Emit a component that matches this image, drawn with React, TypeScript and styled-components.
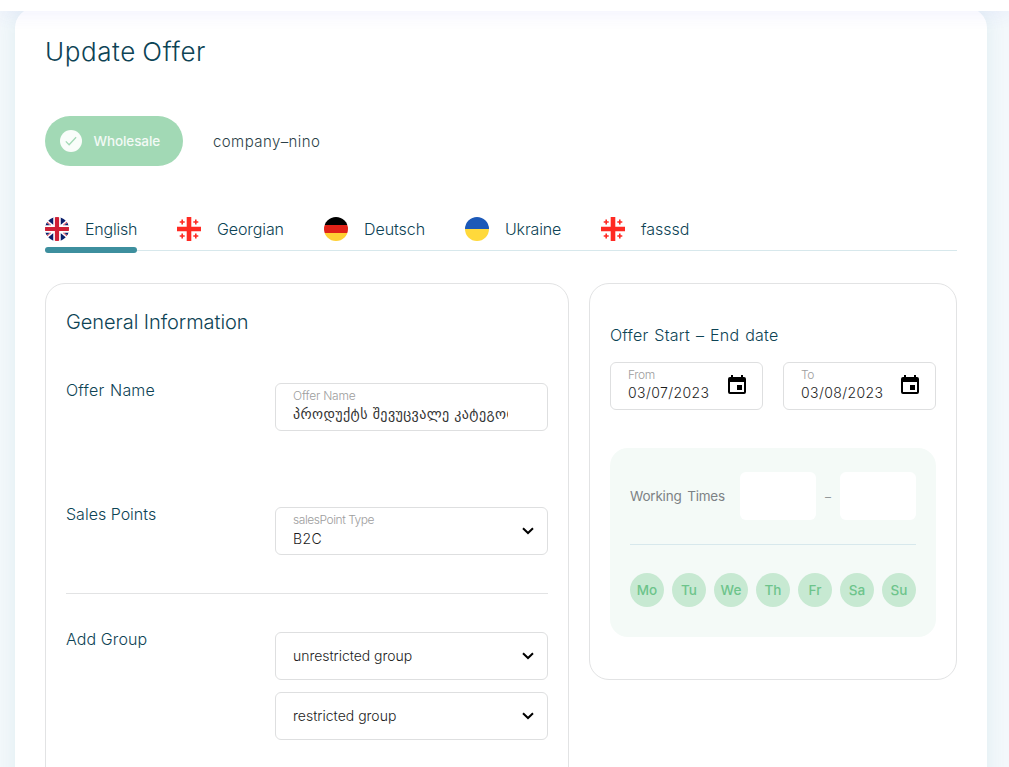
import React from "react";
import styled, { createGlobalStyle } from "styled-components";

const GlobalStyle = createGlobalStyle`
  *, *::before, *::after { box-sizing: border-box; }
  html, body { margin: 0; height: 767px; overflow: hidden; }
  body {
    font-family: Inter, "DejaVu Sans", sans-serif;
    font-weight: 300;
    color: #0d4355;
    background: #f3f8fb;
  }
  h1, h2, h3, p { margin: 0; font-weight: 300; }
  button { font: inherit; border: 0; margin: 0; padding: 0; cursor: pointer; }
`;

const Page = styled.div`
  display: flex;
  flex-direction: column;
  height: 767px;
  overflow: hidden;
`;

const TopBar = styled.header`
  position: relative;
  z-index: 2;
  flex: none;
  height: 11px;
  background: #fff;
  box-shadow: 0 0 20px rgba(70, 70, 230, 0.12);
`;

const Sheet = styled.main`
  flex: none;
  width: 972px;
  height: 800px;
  margin: -3px 0 0 15px;
  padding: 28px 30px 0;
  border-radius: 20px;
  background: #fff;
  box-shadow: 0 0 20px rgba(61, 143, 158, 0.1);
`;

/* A line of type; tracking and word spacing are in px. */
const Line = styled.span<{ $size: number; $track?: number; $word?: number }>`
  display: block;
  white-space: nowrap;
  font-size: ${(p) => p.$size}px;
  letter-spacing: ${(p) => p.$track ?? 0}px;
  word-spacing: ${(p) => p.$word ?? 0}px;
`;

const Title = styled(Line).attrs({ as: "h1" })`
  line-height: 32px;
`;

const CompanyRow = styled.div`
  display: flex;
  align-items: center;
  gap: 30px;
  margin-top: 48px;
  height: 50px;
`;

const Pill = styled.button`
  display: flex;
  align-items: center;
  gap: 11.5px;
  width: 138px;
  height: 50px;
  padding-left: 15px;
  border-radius: 25px;
  background: #a2d9b5;
  color: #f3faf6;
`;

const PillText = styled(Line)`
  font-weight: 500;
`;

const CompanyName = styled(Line)`
  color: #2c3f48;
`;

const Tabs = styled.nav`
  display: flex;
  gap: 40px;
  height: 35px;
  margin-top: 50px;
  border-bottom: 1px solid #d7e8ec;
`;

const Tab = styled.div<{ $width: number; $active?: boolean }>`
  position: relative;
  display: flex;
  flex: none;
  gap: 16px;
  width: ${(p) => p.$width}px;
  line-height: 26px;
  svg { flex: none; margin-top: 1px; }
  &::after {
    content: "";
    display: ${(p) => (p.$active ? "block" : "none")};
    position: absolute;
    left: 0;
    right: 0;
    top: 31px;
    height: 6px;
    border-radius: 3px;
    background: #3d8f9e;
  }
`;

const Columns = styled.div`
  display: grid;
  grid-template-columns: 524px 368px;
  gap: 20px;
  align-items: start;
  margin-top: 32px;
`;

const Panel = styled.section<{ $height: number; $top: number }>`
  height: ${(p) => p.$height}px;
  padding: ${(p) => p.$top}px 20px 0;
  border: 1px solid #e2e3e4;
  border-radius: 20px;
`;

const PanelTitle = styled(Line).attrs({ as: "h2" })`
  line-height: 28px;
`;

const FormRow = styled.div<{ $gap: number }>`
  display: flex;
  justify-content: space-between;
  align-items: flex-start;
  margin-top: ${(p) => p.$gap}px;
`;

const Label = styled(Line)`
  line-height: 16px;
`;

const RowLabel = styled(Label)`
  line-height: 14px;
`;

const Stack = styled.div`
  display: flex;
  flex-direction: column;
  gap: 12px;
`;

const Field = styled.div<{ $width: number; $end: number }>`
  display: flex;
  align-items: center;
  justify-content: space-between;
  width: ${(p) => p.$width}px;
  height: 48px;
  padding: 0 ${(p) => p.$end}px 0 17px;
  border: 1px solid #dedfe0;
  border-radius: 6px;
  color: #1c1c1c;
  svg { flex: none; }
`;

const FieldBody = styled.div<{ $gap: number }>`
  display: flex;
  flex: 0 1 215px;
  flex-direction: column;
  gap: ${(p) => p.$gap}px;
  min-width: 0;
  padding-bottom: 3px;
  overflow: hidden;
`;

const Hint = styled(Line)`
  line-height: 15px;
  color: #9d9d9d;
`;

const Value = styled(Line)`
  line-height: 18px;
`;

const GeorgianValue = styled(Value)`
  font-family: "DejaVu Sans", sans-serif;
  font-weight: 400;
  color: #333;
`;

const Divider = styled.hr<{ $gap: number; $color: string }>`
  height: 1px;
  margin: ${(p) => p.$gap}px 0 0;
  border: 0;
  background: ${(p) => p.$color};
`;

const Dates = styled.div`
  display: flex;
  gap: 20px;
  margin-top: 19px;
`;

const Schedule = styled.div`
  height: 189px;
  margin-top: 38px;
  padding: 24px 20px 0;
  border-radius: 18px;
  background: #f4faf7;
`;

const TimesRow = styled.div`
  display: flex;
  align-items: center;
  color: #7d8285;
`;

const TimesLabel = styled(Line)`
  width: 110px;
  font-weight: 400;
`;

const TimesDash = styled.span`
  width: 24px;
  font-size: 12px;
  text-align: center;
`;

const TimeInput = styled.div`
  width: 76px;
  height: 48px;
  border-radius: 6px;
  background: #fff;
`;

const Days = styled.div`
  display: flex;
  justify-content: space-between;
  margin-top: 28px;
`;

const Day = styled.button`
  width: 34px;
  height: 34px;
  border-radius: 50%;
  background: #c7e9d2;
  color: #6dc48b;
  font-size: 13.5px;
  font-weight: 500;
  text-align: center;
`;

const CalendarBox = styled.span`
  display: flex;
  padding-bottom: 2px;
`;

const CheckIcon = () => (
  <svg width="22" height="22" viewBox="0 0 22 22">
    <circle cx="11" cy="11" r="11" fill="#f9fdfa" />
    <path d="M5.8 11.4l3.3 3.3 7-7.4" fill="none" stroke="#a2d9b5" strokeWidth="1.3" />
  </svg>
);

const Chevron = () => (
  <svg width="12" height="8" viewBox="0 0 12 8">
    <path d="M1 1.2l5 4.8 5-4.8" fill="none" stroke="#000" strokeWidth="2" />
  </svg>
);

const Calendar = () => (
  <CalendarBox>
    <svg width="18" height="20" viewBox="0 0 18 20">
      <path
        fill="#000"
        fillRule="evenodd"
        d="M3 0h2v2h8V0h2v2h1a2 2 0 0 1 2 2v13a2 2 0 0 1-2 2H2a2 2 0 0 1-2-2V4a2 2 0 0 1 2-2h1zM2 7v10h14V7zM9 10h5v5H9z"
      />
    </svg>
  </CalendarBox>
);

const UkFlag = () => (
  <svg width="24" height="24" viewBox="0 0 24 24">
    <clipPath id="uk"><circle cx="12" cy="12" r="12" /></clipPath>
    <g clipPath="url(#uk)">
      <path fill="#fff" d="M0 0h24v24H0z" />
      <path
        fill="#0a1f6b"
        d="M8.500 0v8L3 3.500 6 0zM15.500 0v8L21 3.500 18 0zM8.500 24v-8L3 20.500 6 24zM15.500 24v-8l5.500 4.500L18 24zM0 5.500h1.500L5 8.500H0zM24 5.500h-1.500L19 8.500h5zM0 18.500h1.500L5 15.500H0zM24 18.500h-1.500L19 15.500h5z"
      />
      <path d="M1.500 4.500L6 8.500M22.500 4.500L18 8.500M1.500 19.500L6 15.500M22.500 19.500L18 15.500" stroke="#cf1f35" strokeWidth="0.900" />
      <path d="M12 0v24M0 12h24" stroke="#fff" strokeWidth="7" />
      <path d="M12 0v24M0 12h24" stroke="#cf1f35" strokeWidth="4.200" />
    </g>
  </svg>
);

const GeorgiaFlag = () => (
  <svg width="24" height="24" viewBox="0 0 24 24">
    <path d="M12 0v24M0 12h24" stroke="#ff2a23" strokeWidth="4.600" />
    <path
      d="M5.200 2.500v5M2.700 5h5M18.800 2.500v5M16.300 5h5M5.200 16.500v5M2.700 19h5M18.800 16.500v5M16.300 19h5"
      stroke="#ff2a23"
      strokeWidth="1.600"
    />
  </svg>
);

const GermanyFlag = () => (
  <svg width="24" height="24" viewBox="0 0 24 24">
    <clipPath id="de"><circle cx="12" cy="12" r="12" /></clipPath>
    <g clipPath="url(#de)">
      <path fill="#000" d="M0 0h24v8H0z" />
      <path fill="#e02218" d="M0 8h24v8H0z" />
      <path fill="#ffd034" d="M0 16h24v8H0z" />
    </g>
  </svg>
);

const UkraineFlag = () => (
  <svg width="24" height="24" viewBox="0 0 24 24">
    <path fill="#1c59b8" d="M0 12a12 12 0 0 1 24 0z" />
    <path fill="#ffd93b" d="M0 12a12 12 0 0 0 24 0z" />
  </svg>
);

const tabs = [
  { text: "English", width: 92, track: -0.2, flag: <UkFlag /> },
  { text: "Georgian", width: 107, track: -0.1, flag: <GeorgiaFlag /> },
  { text: "Deutsch", width: 101, track: -0.05, flag: <GermanyFlag /> },
  { text: "Ukraine", width: 96, track: -0.15, flag: <UkraineFlag /> },
  { text: "fasssd", width: 90, track: 0, flag: <GeorgiaFlag /> },
];

const days = ["Mo", "Tu", "We", "Th", "Fr", "Sa", "Su"];

const dates = [
  { hint: "From", value: "03/07/2023" },
  { hint: "To", value: "03/08/2023" },
];

export default function App() {
  return (
    <Page>
      <GlobalStyle />
      <TopBar />
      <Sheet>
        <Title $size={26} $track={0.6} $word={-1.5}>Update Offer</Title>
        <CompanyRow>
          <Pill>
            <CheckIcon />
            <PillText $size={13.5} $track={-0.1}>Wholesale</PillText>
          </Pill>
          <CompanyName $size={15} $track={0.42}>company–nino</CompanyName>
        </CompanyRow>
        <Tabs>
          {tabs.map((t, i) => (
            <Tab key={t.text} $width={t.width} $active={i === 0}>
              {t.flag}
              <Line $size={16} $track={t.track}>{t.text}</Line>
            </Tab>
          ))}
        </Tabs>
        <Columns>
          <Panel $height={540} $top={24}>
            <PanelTitle $size={20} $track={-0.06}>General Information</PanelTitle>
            <FormRow $gap={47}>
              <RowLabel $size={16} $track={0.2} $word={1}>Offer Name</RowLabel>
              <Field $width={273} $end={17}>
                <FieldBody $gap={2}>
                  <Hint $size={12} $track={-0.2}>Offer Name</Hint>
                  <GeorgianValue $size={14} $track={0.4}>პროდუქტს შევუცვალე კატეგორია</GeorgianValue>
                </FieldBody>
              </Field>
            </FormRow>
            <FormRow $gap={76}>
              <RowLabel $size={16}>Sales Points</RowLabel>
              <Field $width={273} $end={13}>
                <FieldBody $gap={3}>
                  <Hint $size={12} $track={-0.45}>salesPoint Type</Hint>
                  <Value $size={14} $track={0.4}>B2C</Value>
                </FieldBody>
                <Chevron />
              </Field>
            </FormRow>
            <Divider $gap={38} $color="#e2e3e4" />
            <FormRow $gap={38}>
              <RowLabel $size={16} $track={0.1}>Add Group</RowLabel>
              <Stack>
                <Field $width={273} $end={13}>
                  <Value $size={14} $track={-0.04}>unrestricted group</Value>
                  <Chevron />
                </Field>
                <Field $width={273} $end={13}>
                  <Value $size={14}>restricted group</Value>
                  <Chevron />
                </Field>
              </Stack>
            </FormRow>
          </Panel>
          <Panel $height={397} $top={43}>
            <Label $size={16} $track={0.2} $word={1.3}>Offer Start – End date</Label>
            <Dates>
              {dates.map((d) => (
                <Field key={d.hint} $width={153} $end={16}>
                  <FieldBody $gap={2}>
                    <Hint $size={12} $track={-0.4}>{d.hint}</Hint>
                    <Value $size={14} $track={0.4}>{d.value}</Value>
                  </FieldBody>
                  <Calendar />
                </Field>
              ))}
            </Dates>
            <Schedule>
              <TimesRow>
                <TimesLabel $size={13.5} $track={-0.2} $word={2}>Working Times</TimesLabel>
                <TimeInput />
                <TimesDash>–</TimesDash>
                <TimeInput />
              </TimesRow>
              <Divider $gap={24} $color="#d7e8ec" />
              <Days>
                {days.map((d) => <Day key={d}>{d}</Day>)}
              </Days>
            </Schedule>
          </Panel>
        </Columns>
      </Sheet>
    </Page>
  );
}
